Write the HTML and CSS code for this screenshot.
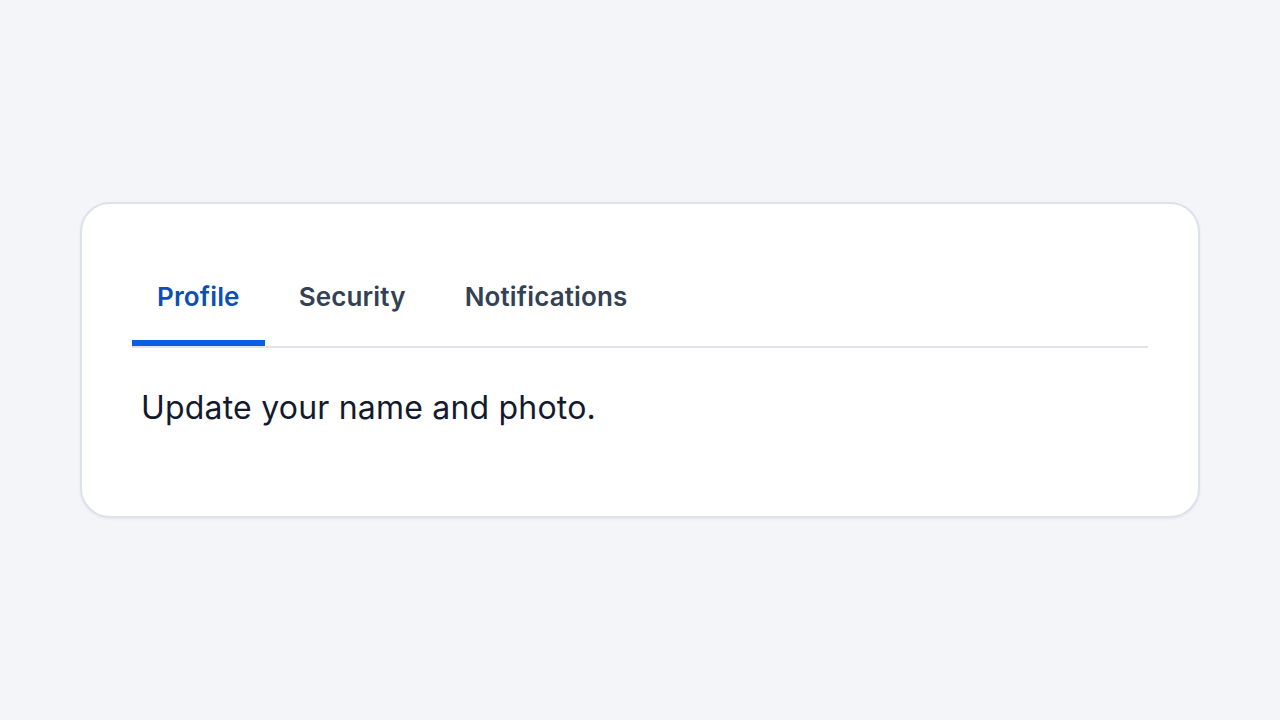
FILE: index.html
```html
<!DOCTYPE html>
<html lang="en">
<head>
<meta charset="utf-8">
<title>Settings tabs</title>
<link rel="stylesheet" href="styles.css">
</head>
<body>
<main class="page">
  <section class="card">
    <div class="tablist" role="tablist">
      <button class="tab is-active" role="tab" aria-selected="true">Profile</button>
      <button class="tab" role="tab" aria-selected="false">Security</button>
      <button class="tab" role="tab" aria-selected="false">Notifications</button>
    </div>
    <div class="panel" role="tabpanel">
      <p class="panel-text">Update your name and photo.</p>
    </div>
  </section>
</main>
</body>
</html>
```

FILE: styles.css
```css
* { box-sizing: border-box; }
html, body { margin: 0; padding: 0; }
body {
  background: #f3f5f9;
  font-family: Inter, "Noto Sans", sans-serif;
  width: 1280px;
  height: 720px;
}
.page {
  height: 720px;
  display: flex;
  align-items: center;
  justify-content: center;
}
.card {
  width: 1120px;
  height: 316px;
  background: #ffffff;
  border: 2px solid #dde1ea;
  border-radius: 30px;
  box-shadow: 0 1px 3px rgba(15, 23, 42, 0.06);
  padding: 51px 50px 0;
}
.tablist {
  display: flex;
  gap: 9px;
  border-bottom: 2px solid #dfe3eb;
}
.tab {
  position: relative;
  appearance: none;
  background: none;
  border: 0;
  margin: 0;
  font-family: inherit;
  font-size: 26px;
  font-weight: 600;
  letter-spacing: 0.15px;
  line-height: 36px;
  color: #334155;
  padding: 24px 25px 31px;
  cursor: pointer;
}
.tab.is-active { color: #0b4fb3; }
.tab.is-active::after {
  content: "";
  position: absolute;
  left: 0;
  right: 0;
  bottom: 0;
  height: 6px;
  background: #0a5fe0;
}
.panel { padding: 36px 9px 0; }
.panel-text {
  margin: 0;
  font-size: 32px;
  letter-spacing: 0.2px;
  line-height: 48px;
  color: #141a2e;
}
```
